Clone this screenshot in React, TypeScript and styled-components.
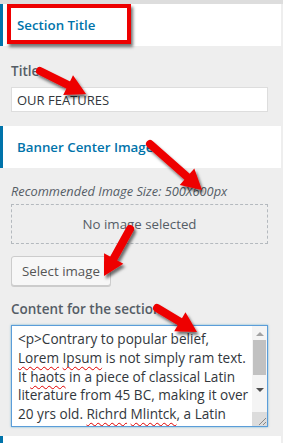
import styled, { createGlobalStyle } from 'styled-components';

const GlobalStyle = createGlobalStyle`
    body {
        margin: 0;
        background: #eeeeee;
        font-family: "Open Sans", "Noto Sans", sans-serif;
    }
`;

const Page = styled.div`
    position: relative;
    width: 283px;
    height: 443px;
    overflow: hidden;
    background: #eeeeee;
    border-top: 4px solid #dddddd;
    box-sizing: border-box;
`;

const Panel = styled.div`
    width: 281px;
    display: flex;
    flex-direction: column;
`;

const SectionHeader = styled.div`
    position: relative;
    height: 42px;
    flex-shrink: 0;
    background: #fff;
    border-left: 3px solid #0073aa;
    display: flex;
    align-items: center;
    padding-left: 14px;
    font-size: 13.3px;
    font-weight: 600;
    color: #0073aa;
`;

const Highlight = styled.div`
    position: absolute;
    left: 4px;
    top: 0;
    width: 116px;
    height: 32px;
    border: 4px solid #ee0000;
    box-shadow: 2px 3px 3px rgba(0, 0, 0, 0.55);
`;

const Body = styled.div<{ $top: number; $bottom: number }>`
    padding: ${(p) => p.$top}px 13px ${(p) => p.$bottom}px 11px;
    display: flex;
    flex-direction: column;
`;

const Label = styled.div<{ $gap?: number }>`
    font-size: 13.5px;
    line-height: 20px;
    font-weight: 600;
    color: #555d66;
    margin-top: ${(p) => p.$gap ?? 0}px;
    margin-bottom: 6px;
`;

const Input = styled.div`
    height: 25px;
    box-sizing: border-box;
    background: #fff;
    border: 1px solid #dddddd;
    padding: 0 5px;
    display: flex;
    align-items: center;
    font-size: 13px;
    color: #32373c;
`;

const Hint = styled.div`
    font-size: 12.8px;
    line-height: 18px;
    font-style: italic;
    color: #555d66;
    margin-bottom: 4px;
`;

const Placeholder = styled.div`
    height: 40px;
    box-sizing: border-box;
    border: 1px dashed #b4b9be;
    display: flex;
    align-items: center;
    justify-content: center;
    font-size: 13.3px;
    color: #555d66;
`;

const Button = styled.div`
    align-self: flex-start;
    margin-top: 12px;
    height: 30px;
    box-sizing: border-box;
    padding: 0 10px;
    display: flex;
    align-items: center;
    font-size: 13.3px;
    color: #555;
    background: #f7f7f7;
    border: 1px solid #cccccc;
    border-radius: 3px;
    box-shadow: 0 1px 0 #cccccc;
`;

const TextArea = styled.div`
    height: 102px;
    flex-shrink: 0;
    box-sizing: border-box;
    background: #fff;
    border: 1px solid #5b9dd9;
    box-shadow: 0 0 2px rgba(30, 140, 190, 0.6);
    display: flex;
    overflow: hidden;
`;

const TextContent = styled.div`
    flex: 1;
    padding: 4px 0 0 6px;
    font-size: 13.6px;
    line-height: 18.8px;
    color: #32373c;
    white-space: nowrap;
    overflow: hidden;
`;

const Misspelled = styled.span`
    text-decoration: underline wavy #e00000;
    text-decoration-thickness: 1px;
    text-underline-offset: 3px;
`;

const ScrollBar = styled.div`
    width: 15px;
    flex-shrink: 0;
    display: flex;
    flex-direction: column;
    align-items: center;
    background: #f4f4f4;
`;

const ScrollArrow = styled.div<{ $down?: boolean }>`
    width: 0;
    height: 0;
    margin: ${(p) => (p.$down ? '4px 0 6px' : '6px 0 4px')};
    border-left: 4px solid transparent;
    border-right: 4px solid transparent;
    ${(p) => (p.$down ? 'border-top: 4px solid #505050;' : 'border-bottom: 4px solid #a3a3a3;')}
`;

const Thumb = styled.div`
    width: 13px;
    height: 35px;
    background: #c1c1c1;
`;

const Track = styled.div`
    flex: 1;
`;

const Grip = styled.div`
    width: 15px;
    height: 14px;
    background: #dcdcdc;
    display: flex;
    align-items: flex-end;
    justify-content: flex-end;
`;

const Spacer = styled.div<{ $h: number }>`
    height: ${(p) => p.$h}px;
    flex-shrink: 0;
`;

const Overlay = styled.svg`
    position: absolute;
    left: 0;
    top: 0;
    pointer-events: none;
`;

const arrows = [
    { x1: 40, y1: 67, x2: 86, y2: 90 },
    { x1: 150, y1: 140, x2: 202, y2: 186 },
    { x1: 130, y1: 225, x2: 104, y2: 272 },
    { x1: 157, y1: 304, x2: 197, y2: 328 },
];

function Arrow({ x1, y1, x2, y2 }: { x1: number; y1: number; x2: number; y2: number }) {
    const dx = x2 - x1;
    const dy = y2 - y1;
    const len = Math.hypot(dx, dy);
    const ux = dx / len;
    const uy = dy / len;
    const px = -uy;
    const py = ux;
    const head = 20;
    const bx = x2 - ux * head;
    const by = y2 - uy * head;
    const w = 11;
    const pts = `${bx + px * w},${by + py * w} ${x2},${y2} ${bx - px * w},${by - py * w}`;
    return (
        <g>
            <line x1={x1} y1={y1} x2={bx + ux * 2} y2={by + uy * 2} stroke="#ee0000" strokeWidth={8} strokeLinecap="round" />
            <polygon points={pts} fill="#ee0000" />
        </g>
    );
}

export default function App() {
    return (
        <Page>
            <GlobalStyle />
            <Panel>
                <SectionHeader>
                    <Highlight />
                    Section Title
                </SectionHeader>
                <Body $top={15} $bottom={14}>
                    <Label>Title</Label>
                    <Input>OUR FEATURES</Input>
                </Body>
                <SectionHeader>Banner Center Image</SectionHeader>
                <Body $top={14} $bottom={9}>
                    <Hint>Recommended Image Size: 500X600px</Hint>
                    <Placeholder>No image selected</Placeholder>
                    <Button>Select image</Button>
                    <Label $gap={13}>Content for the section</Label>
                    <TextArea>
                        <TextContent>
                            &lt;p&gt;Contrary to popular belief,
                            <br />
                            <Misspelled>Lorem</Misspelled> <Misspelled>Ipsum</Misspelled> is not simply ram text.
                            <br />
                            It <Misspelled>haots</Misspelled> in a piece of classical Latin
                            <br />
                            literature from 45 BC, making it over
                            <br />
                            20 yrs old. <Misspelled>Richrd</Misspelled> <Misspelled>Mlintck</Misspelled>, a Latin
                        </TextContent>
                        <ScrollBar>
                            <ScrollArrow />
                            <Thumb />
                            <Track />
                            <ScrollArrow $down />
                            <Spacer $h={14} />
                            <Grip>
                                <svg width="10" height="10" viewBox="0 0 10 10">
                                    <line x1="2" y1="9" x2="9" y2="2" stroke="#888" />
                                    <line x1="6" y1="9" x2="9" y2="6" stroke="#888" />
                                </svg>
                            </Grip>
                        </ScrollBar>
                    </TextArea>
                </Body>
                <SectionHeader />
            </Panel>
            <Overlay width={283} height={443}>
                <defs>
                    <filter id="sh" x="-20%" y="-20%" width="150%" height="150%">
                        <feDropShadow dx="2" dy="3" stdDeviation="1.5" floodColor="#000" floodOpacity="0.55" />
                    </filter>
                </defs>
                <g filter="url(#sh)">
                    {arrows.map((a, i) => (
                        <Arrow key={i} {...a} />
                    ))}
                </g>
            </Overlay>
        </Page>
    );
}
